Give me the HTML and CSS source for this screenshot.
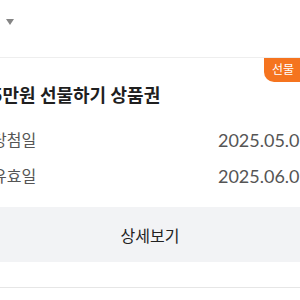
FILE: index.html
```html
<!DOCTYPE html>
<html lang="ko">
<head>
    <meta charset="UTF-8">
    <title>선물하기 상품권</title>
    <link rel="stylesheet" href="styles.css">
</head>
<body>
    <!-- filter header -->
    <div class="topBar">
        <span class="caret"></span>
    </div>

    <div class="card">
        <span class="badge">선물</span>
        <div class="cardBody">
            <h3 class="title">5만원 선물하기 상품권</h3>
            <div class="row">
                <span class="label">당첨일</span>
                <span class="value">2025.05.01</span>
            </div>
            <div class="row">
                <span class="label">유효일</span>
                <span class="value">2025.06.01</span>
            </div>
        </div>
        <button class="detailBtn">상세보기</button>
    </div>
</body>
</html>
```

FILE: styles.css
```css
body {
    margin: 0;
    width: 300px;
    height: 300px;
    overflow: hidden;
    background-color: #ffffff;
    font-family: Lato, "Noto Sans CJK KR", sans-serif;
    color: #222222;
}

.topBar {
    height: 57px;
    padding-left: 6px;
    padding-top: 19px;
    box-sizing: border-box;
}
.caret {
    display: block;
    width: 0;
    height: 0;
    border-left: 4.5px solid transparent;
    border-right: 4.5px solid transparent;
    border-top: 6px solid #858585;
}

.card {
    position: relative;
    border-top: 1px solid #eeeeee;
    height: 229px;
    border-bottom: 1px solid #e6e6e6;
}
.badge {
    position: absolute;
    top: 0;
    left: 264px;
    background-color: #f5741f;
    color: #ffffff;
    font-size: 12px;
    line-height: 24px;
    padding: 0 8px;
    border-bottom-left-radius: 10px;
    white-space: nowrap;
}

.cardBody {
    margin-left: -8px;
    width: 318px;
    padding-top: 26px;
}
.title {
    margin: 0 0 0 0;
    font-size: 18px;
    font-weight: 700;
    line-height: 22px;
    color: #1f1f1f;
}
.row {
    display: flex;
    justify-content: space-between;
    align-items: center;
    font-size: 16px;
    line-height: 22px;
    color: #555555;
}
.value {
    font-size: 18px;
}
.row:first-of-type {
    margin-top: 23px;
}
.row + .row {
    margin-top: 14px;
}

.detailBtn {
    display: block;
    margin-top: 20px;
    width: 100%;
    height: 55px;
    border: none;
    background-color: #f2f3f5;
    font-family: inherit;
    font-size: 16px;
    color: #222222;
}
```
